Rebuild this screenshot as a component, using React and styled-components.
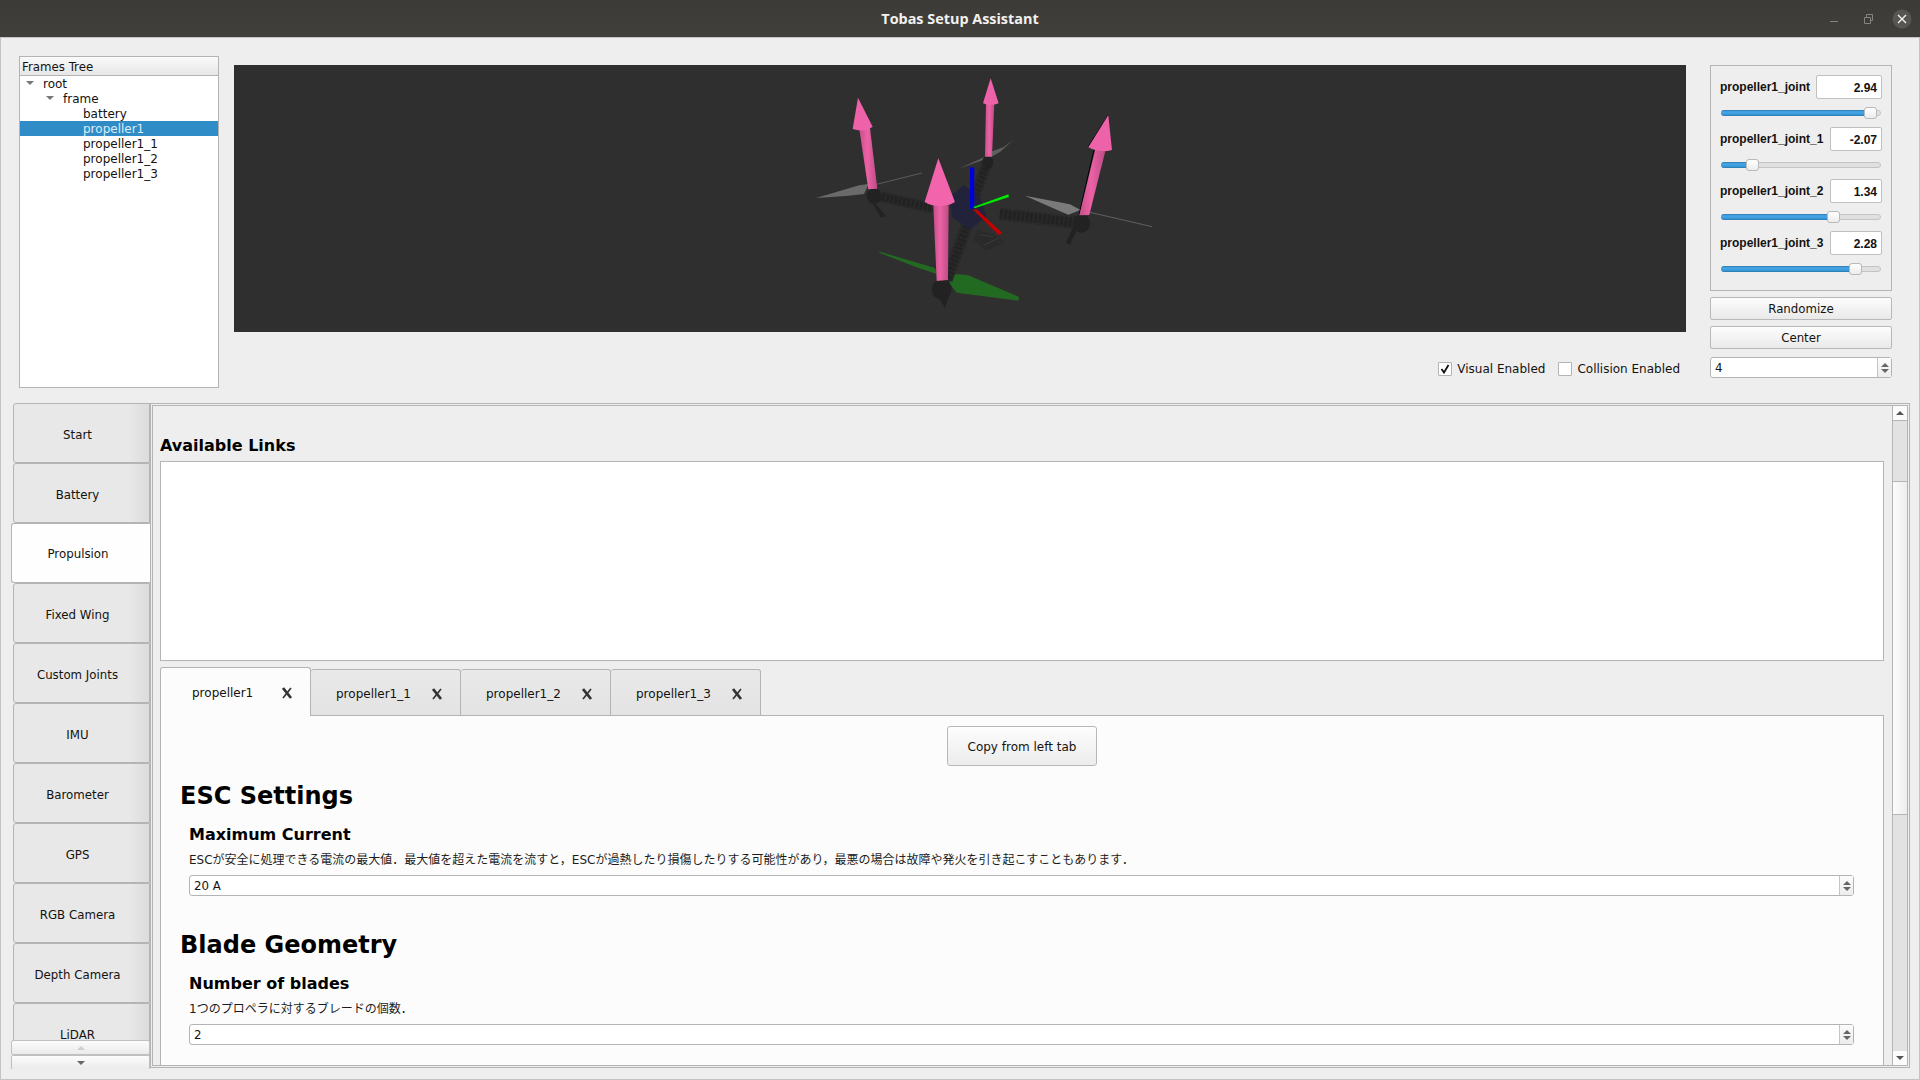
import React from 'react';
import styled, {createGlobalStyle} from 'styled-components';

const GlobalStyle = createGlobalStyle`
    html, body {
        margin: 0;
        padding: 0;
        background: #eeeeee;
    }
    body {
        font-family: "DejaVu Sans", "Noto Sans CJK JP", sans-serif;
        font-size: 12px;
        color: #14120f;
    }
    * {
        box-sizing: border-box;
    }
`;

const LINE = '#b4b4b4';

const Window = styled.div`
    width: 1920px;
    height: 1080px;
    display: flex;
    flex-direction: column;
    overflow: hidden;
`;

const TitleBar = styled.div`
    height: 37px;
    flex: none;
    position: relative;
    display: flex;
    align-items: center;
    justify-content: center;
    background: linear-gradient(#3c3b37, #403f3b);
    color: #f2f1ef;
    font-family: "Open Sans", sans-serif;
    font-size: 14.4px;
    font-weight: 700;
`;

const WindowButtons = styled.div`
    position: absolute;
    top: 0;
    right: 8px;
    height: 37px;
    display: flex;
    align-items: center;
    gap: 14px;
`;

const WindowButton = styled.svg`
    width: 20px;
    height: 20px;
    display: block;
`;

const Body = styled.div`
    flex: 1;
    display: flex;
    flex-direction: column;
    border: 1px solid #c4c4c4;
    background: #eeeeee;
`;

const TopSection = styled.div`
    height: 365px;
    flex: none;
    display: flex;
    padding: 18px 0 0 18px;
`;

const Tree = styled.div`
    width: 200px;
    height: 332px;
    flex: none;
    background: #fff;
    border: 1px solid ${LINE};
`;

const TreeHeader = styled.div`
    height: 19px;
    padding: 2px 0 0 2px;
    background: linear-gradient(#fafafa, #e6e6e6);
    border-bottom: 1px solid ${LINE};
    line-height: 17px;
    font-size: 11.8px;
`;

const TreeRow = styled.div`
    height: 15px;
    display: flex;
    align-items: center;
    padding: 1px 0 0 ${p => p.$indent}px;
    line-height: 15px;
    font-size: 12px;
    background: ${p => p.$selected ? '#308cc6' : 'transparent'};
    color: ${p => p.$selected ? '#d8ecf8' : 'inherit'};
`;

const TreeArrow = styled.span`
    width: 0;
    height: 0;
    margin: 0 9px 3px -17px;
    border-left: 4px solid transparent;
    border-right: 4px solid transparent;
    border-top: 4px solid #777;
`;

const Stage = styled.div`
    width: 1452px;
    flex: none;
    margin: 9px 0 0 15px;
`;

const Viewport = styled.svg`
    width: 1452px;
    height: 267px;
    display: block;
    background: #2f2f2f;
`;

const DisplayOptions = styled.div`
    height: 20px;
    margin-top: 27px;
    padding-right: 6px;
    display: flex;
    justify-content: flex-end;
    align-items: center;
    gap: 13px;
    font-size: 12px;
`;

const CheckLabel = styled.label`
    display: flex;
    align-items: center;
    gap: 5px;
`;

const CheckBox = styled.span`
    width: 14px;
    height: 14px;
    display: flex;
    align-items: center;
    justify-content: center;
    background: #fff;
    border: 1px solid ${LINE};
    border-radius: 1px;
`;

const SidePanel = styled.div`
    width: 182px;
    flex: none;
    margin: 9px 0 0 24px;
`;

const JointBox = styled.div`
    height: 226px;
    padding: 9px 9px 0 9px;
    border: 1px solid ${LINE};
`;

const JointRow = styled.div`
    height: 24px;
    display: flex;
    justify-content: space-between;
    align-items: center;
    font-family: "Liberation Sans", sans-serif;
    font-weight: 700;
    font-size: 12px;
`;

const JointValue = styled.div`
    width: ${p => p.$width}px;
    height: 24px;
    padding: 1px 4px 0 0;
    display: flex;
    align-items: center;
    justify-content: flex-end;
    background: #fff;
    border: 1px solid #c0c0c0;
    border-radius: 2px;
`;

const Slider = styled.div`
    position: relative;
    height: 16px;
    margin: 6px 0 6px 1px;
    width: 160px;
    display: flex;
    align-items: center;
`;

const SliderTrack = styled.div`
    width: 100%;
    height: 6px;
    border: 1px solid #c4c4c4;
    border-radius: 3px;
    background: #e0e0e0;
`;

const SliderFill = styled.div`
    height: 6px;
    margin: -1px 0 0 -1px;
    border-radius: 3px 0 0 3px;
    background: linear-gradient(#2a78ad, #48a6e6 30%, #3a9bdc 70%, #2a78ad);
`;

const SliderHandle = styled.div`
    position: absolute;
    top: 2px;
    width: 13px;
    height: 12px;
    margin-left: -6px;
    background: linear-gradient(#fff, #ececec);
    border: 1px solid #b8b8b8;
    border-radius: 3px;
`;

const PanelButton = styled.div`
    height: 23px;
    margin-top: ${p => p.$top}px;
    display: flex;
    align-items: center;
    justify-content: center;
    background: linear-gradient(#fdfdfd, #e9e9e9);
    border: 1px solid #b8b8b8;
    border-radius: 2px;
    font-size: 11.8px;
`;

const SpinBox = styled.div`
    height: ${p => p.$height || 21}px;
    margin-top: ${p => p.$top || 0}px;
    display: flex;
    background: #fff;
    border: 1px solid ${LINE};
    border-radius: 3px;
    font-size: 11.8px;
`;

const SpinText = styled.div`
    flex: 1;
    padding: 1px 0 0 4px;
    display: flex;
    align-items: center;
`;

const SpinButtons = styled.div`
    width: 14px;
    flex: none;
    display: flex;
    flex-direction: column;
    align-items: center;
    justify-content: center;
    gap: 2px;
    background: linear-gradient(#fbfbfb, #ededed);
    border-left: 1px solid #c4c4c4;
`;

const Triangle = styled.span`
    width: 0;
    height: 0;
    border-left: ${p => p.$size || 4}px solid transparent;
    border-right: ${p => p.$size || 4}px solid transparent;
    ${p => p.$up ? 'border-bottom' : 'border-top'}: ${p => p.$tall || 4}px solid ${p => p.$color || '#666'};
`;

const BottomSection = styled.div`
    flex: 1;
    min-height: 0;
    display: flex;
    padding: 0 0 10px 10px;
`;

const ToolBox = styled.div`
    position: relative;
    width: 139px;
    height: 666px;
    flex: none;
    overflow: hidden;
`;

const ToolTab = styled.div`
    height: 60px;
    margin-left: ${p => p.$active ? 0 : 2}px;
    display: flex;
    align-items: center;
    justify-content: center;
    padding: ${p => p.$active ? '1px 6px 0 0' : '3px 8px 0 0'};
    background: ${p => p.$active
        ? '#fefefe'
        : 'linear-gradient(90deg, #e8e8e8 0, #e8e8e8 85%, #dcdcdc 100%)'};
    border: 1px solid ${LINE};
    border-right: ${p => p.$active ? 'none' : `1px solid ${LINE}`};
    border-radius: 3px 0 0 3px;
    font-size: 11.8px;
`;

const ToolScroll = styled.div`
    position: absolute;
    left: 0;
    width: 139px;
    height: 15px;
    top: ${p => p.$top}px;
    display: flex;
    align-items: center;
    justify-content: center;
    background: linear-gradient(#fcfcfc, #ebebeb);
    border: 1px solid #c0c0c0;
    border-radius: 2px;
`;

const MainFrame = styled.div`
    width: 1760px;
    height: 665px;
    flex: none;
    padding: 1px;
    border: 1px solid ${LINE};
`;

const MainInner = styled.div`
    height: 100%;
    display: flex;
    border: 1px solid ${LINE};
`;

const ScrollContent = styled.div`
    flex: 1;
    min-width: 0;
    overflow: hidden;
    padding: 0 8px 0 7px;
`;

const ScrollBar = styled.div`
    width: 15px;
    flex: none;
    display: flex;
    flex-direction: column;
    border-left: 1px solid ${LINE};
`;

const ScrollArrow = styled.div`
    height: 14px;
    flex: none;
    display: flex;
    align-items: center;
    justify-content: center;
    background: #fbfbfb;
`;

const ScrollTrack = styled.div`
    height: ${p => p.$height ? `${p.$height}px` : 'auto'};
    flex: ${p => p.$height ? 'none' : 1};
    background: #e2e2e2;
    border-top: 1px solid ${LINE};
`;

const ScrollThumb = styled.div`
    height: 333px;
    flex: none;
    background: linear-gradient(90deg, #fcfcfc, #ededed);
    border-top: 1px solid ${LINE};
`;

const SectionLabel = styled.div`
    margin-top: 31px;
    height: 24px;
    line-height: 18px;
    font-weight: 700;
    font-size: 16px;
    color: #000;
`;

const LinkList = styled.div`
    height: 200px;
    background: #fff;
    border: 1px solid ${LINE};
`;

const TabBar = styled.div`
    height: 49px;
    margin-top: 6px;
    display: flex;
    align-items: flex-end;
`;

const Tab = styled.div`
    width: ${p => p.$active ? 151 : 150}px;
    height: ${p => p.$active ? 49 : 47}px;
    display: flex;
    align-items: center;
    padding: ${p => p.$active ? '2px 17px 0 31px' : '2px 17px 0 25px'};
    justify-content: space-between;
    background: ${p => p.$active ? '#fcfcfc' : 'linear-gradient(#e9e9e9, #e3e3e3)'};
    border: 1px solid ${LINE};
    border-left: ${p => p.$active ? `1px solid ${LINE}` : 'none'};
    border-bottom: ${p => p.$active ? 'none' : `1px solid ${LINE}`};
    border-radius: 3px 3px 0 0;
    position: relative;
    z-index: ${p => p.$active ? 1 : 0};
    font-size: 12px;
`;

const TabClose = styled.svg`
    width: 12px;
    height: 12px;
    flex: none;
`;

const TabPage = styled.div`
    height: 400px;
    margin-top: -1px;
    padding: 10px 29px 0 19px;
    background: #fcfcfc;
    border: 1px solid ${LINE};
`;

const CopyRow = styled.div`
    display: flex;
    justify-content: center;
    padding-left: 10px;
`;

const CopyButton = styled.div`
    width: 150px;
    height: 40px;
    padding-top: 1px;
    display: flex;
    align-items: center;
    justify-content: center;
    background: linear-gradient(#fdfdfd, #ececec);
    border: 1px solid #b8b8b8;
    border-radius: 3px;
    font-size: 12px;
`;

const GroupTitle = styled.h2`
    margin: ${p => p.$top}px 0 0;
    height: 30px;
    line-height: 30px;
    font-size: 24px;
    font-weight: 700;
    color: #000;
`;

const Setting = styled.div`
    padding-left: 9px;
`;

const SettingTitle = styled.h3`
    margin: 14px 0 0;
    height: 20px;
    line-height: 20px;
    font-size: 16px;
    font-weight: 700;
    color: #000;
`;

const SettingDesc = styled.p`
    margin: 6px 0 0;
    height: 18px;
    line-height: 18px;
    font-size: 12px;
    white-space: nowrap;
    color: #1c1c1c;
`;

const ComboText = styled(SpinText)`
    font-size: 11.8px;
`;

const Arrow = ({d, fill}) => <path d={d} fill={fill}/>;

// drone coordinates are taken from a 3x crop of the view, hence the scale
const DroneView = () => (
    <Viewport viewBox="0 0 1452 267">
        <defs>
            <linearGradient id="pinkShade" x1="0" x2="1" y1="0" y2="0">
                <stop offset="0" stopColor="#c64f8a"/>
                <stop offset="0.45" stopColor="#ec62a6"/>
                <stop offset="1" stopColor="#bd4c84"/>
            </linearGradient>
            <filter id="soft"><feGaussianBlur stdDeviation="1.2"/></filter>
        </defs>
        <g transform="translate(526 -5) scale(0.3333)">
            <g filter="url(#soft)">
                <path d="M168 414 L298 376 L326 372 L312 402 L258 408 Z" fill="#6b6b6b"/>
                <path d="M350 373 L486 339" stroke="#5a5a5a" strokeWidth="3"/>
                <path d="M597 326 L680 288 L690 276 L730 262 L760 240 L720 276 L695 290 Z" fill="#5f5f5f"/>
                <path d="M795 407 L930 433 L962 450 L925 464 L880 445 Z" fill="#7a7a7a"/>
                <path d="M990 457 L1176 500" stroke="#5f5f5f" strokeWidth="3"/>
                <path d="M355 574 L525 624 L530 642 L470 622 L362 580 Z" fill="#246a22"/>
                <path d="M562 640 L625 646 L776 710 L776 722 L590 698 L570 672 Z" fill="#246a22"/>
                <g stroke="#292929" fill="none">
                    <path d="M340 405 L520 445" strokeWidth="32"/>
                    <path d="M720 462 L960 490" strokeWidth="38"/>
                    <path d="M685 300 L640 420" strokeWidth="32"/>
                    <path d="M620 500 L560 660" strokeWidth="36"/>
                </g>
                <g stroke="#222" fill="none">
                    <path d="M340 405 L520 445" strokeWidth="22" strokeDasharray="8 5"/>
                    <path d="M720 462 L960 490" strokeWidth="26" strokeDasharray="8 5"/>
                    <path d="M685 300 L640 420" strokeWidth="20" strokeDasharray="8 5"/>
                    <path d="M620 500 L560 660" strokeWidth="24" strokeDasharray="8 5"/>
                </g>
                <path d="M570 410 L610 375 L660 410 L680 470 L630 510 L575 470 Z" fill="#23243a"/>
                <path d="M650 510 L700 522 L735 545 L680 572 L640 540 Z" fill="#2a2a2a"/>
                <path d="M660 525 L700 530 M672 556 L716 534" stroke="#444" strokeWidth="2"/>
                <g fill="#242424">
                    <ellipse cx="342" cy="408" rx="22" ry="24"/>
                    <ellipse cx="545" cy="688" rx="30" ry="32"/>
                    <ellipse cx="965" cy="490" rx="26" ry="28"/>
                    <ellipse cx="684" cy="306" rx="16" ry="20"/>
                    <path d="M345 430 L380 470 L362 472 L335 425 Z"/>
                    <path d="M950 510 L930 555 L918 548 L940 500 Z"/>
                    <path d="M530 705 L555 745 L570 700 Z"/>
                </g>
            </g>
            <path d="M630 322 H643 V446 H630 Z" fill="#0000d8"/>
            <path d="M640 441 L745 403 L747 411 L644 445 Z" fill="#00e800"/>
            <path d="M640 450 L648 446 L726 518 L717 526 Z" fill="#c40000"/>
            <Arrow d="M298 208 L330 204 L352 386 L325 388 Z" fill="url(#pinkShade)"/>
            <Arrow d="M294 113 L338 200 Q310 218 278 207 Z" fill="#ee62a9"/>
            <Arrow d="M678 130 L703 130 L696 290 L675 290 Z" fill="url(#pinkShade)"/>
            <Arrow d="M692 55 L716 130 Q692 140 669 130 Z" fill="#ee62a9"/>
            <Arrow d="M520 436 L566 436 L564 660 L530 663 Z" fill="url(#pinkShade)"/>
            <Arrow d="M535 295 L585 426 Q540 452 494 426 Z" fill="#f264ac"/>
            <path d="M1002 270 L958 462" stroke="#000" strokeWidth="3"/>
            <Arrow d="M1006 268 L1036 274 L988 465 L958 466 Z" fill="url(#pinkShade)"/>
            <path d="M1045 165 L985 260" stroke="#000" strokeWidth="3"/>
            <Arrow d="M1045 165 L1056 270 Q1020 280 985 262 Z" fill="#ee62a9"/>
        </g>
    </Viewport>
);

const joints = [
    {name: 'propeller1_joint', value: 2.94, width: 66},
    {name: 'propeller1_joint_1', value: -2.07, width: 52},
    {name: 'propeller1_joint_2', value: 1.34, width: 52},
    {name: 'propeller1_joint_3', value: 2.28, width: 52},
];

const toolTabs = ['Start', 'Battery', 'Propulsion', 'Fixed Wing', 'Custom Joints', 'IMU', 'Barometer', 'GPS', 'RGB Camera', 'Depth Camera', 'LiDAR'];
const linkTabs = ['propeller1', 'propeller1_1', 'propeller1_2', 'propeller1_3'];

const JointControl = ({name, value, width}) => {
    const ratio = (value + Math.PI) / (2 * Math.PI);
    const pos = 6 + 148 * ratio;
    return (
        <>
            <JointRow>
                <span>{name}</span>
                <JointValue $width={width}>{value.toFixed(2)}</JointValue>
            </JointRow>
            <Slider>
                <SliderTrack>
                    <SliderFill style={{width: pos}}/>
                </SliderTrack>
                <SliderHandle style={{left: pos}}/>
            </Slider>
        </>
    );
};

const Spinner = () => (
    <SpinButtons>
        <Triangle $up/>
        <Triangle/>
    </SpinButtons>
);

const App = () => (
    <Window>
        <GlobalStyle/>
        <TitleBar>
            Tobas Setup Assistant
            <WindowButtons>
                <WindowButton viewBox="0 0 20 20">
                    <path d="M6 12.5 H14" stroke="#85837f" strokeWidth="1"/>
                </WindowButton>
                <WindowButton viewBox="0 0 20 20">
                    <path d="M6.5 8.5 H12.5 V14.5 H6.5 Z M8.5 8 V5.5 H14.5 V11.5 H13" stroke="#85837f" strokeWidth="1" fill="none"/>
                </WindowButton>
                <WindowButton viewBox="0 0 20 20">
                    <circle cx="10" cy="10" r="9.5" fill="#575653"/>
                    <path d="M6 6 L14 14 M14 6 L6 14" stroke="#f4f3f1" strokeWidth="1.4"/>
                </WindowButton>
            </WindowButtons>
        </TitleBar>
        <Body>
            <TopSection>
                <Tree>
                    <TreeHeader>Frames Tree</TreeHeader>
                    <TreeRow $indent={23}><TreeArrow/>root</TreeRow>
                    <TreeRow $indent={43}><TreeArrow/>frame</TreeRow>
                    <TreeRow $indent={63}>battery</TreeRow>
                    <TreeRow $indent={63} $selected>propeller1</TreeRow>
                    <TreeRow $indent={63}>propeller1_1</TreeRow>
                    <TreeRow $indent={63}>propeller1_2</TreeRow>
                    <TreeRow $indent={63}>propeller1_3</TreeRow>
                </Tree>
                <Stage>
                    <DroneView/>
                    <DisplayOptions>
                        <CheckLabel>
                            <CheckBox>
                                <svg width="10" height="10" viewBox="0 0 10 10">
                                    <path d="M1.5 5 L4 8.5 L8.5 1" stroke="#111" strokeWidth="1.8" fill="none"/>
                                </svg>
                            </CheckBox>
                            Visual Enabled
                        </CheckLabel>
                        <CheckLabel>
                            <CheckBox/>
                            Collision Enabled
                        </CheckLabel>
                    </DisplayOptions>
                </Stage>
                <SidePanel>
                    <JointBox>
                        {joints.map(joint => <JointControl key={joint.name} {...joint}/>)}
                    </JointBox>
                    <PanelButton $top={6}>Randomize</PanelButton>
                    <PanelButton $top={6}>Center</PanelButton>
                    <SpinBox $top={8}>
                        <SpinText>4</SpinText>
                        <Spinner/>
                    </SpinBox>
                </SidePanel>
            </TopSection>
            <BottomSection>
                <ToolBox>
                    {toolTabs.map(name => <ToolTab key={name} $active={name === 'Propulsion'}>{name}</ToolTab>)}
                    <ToolScroll $top={637}><Triangle $up $color="#cfcfcf"/></ToolScroll>
                    <ToolScroll $top={652}><Triangle/></ToolScroll>
                </ToolBox>
                <MainFrame>
                    <MainInner>
                        <ScrollContent>
                            <SectionLabel>Available Links</SectionLabel>
                            <LinkList/>
                            <TabBar>
                                {linkTabs.map((name, i) => (
                                    <Tab key={name} $active={i === 0}>
                                        {name}
                                        <TabClose viewBox="0 0 12 12">
                                            <path d="M2 1 L10 11" stroke="#333" strokeWidth="2.8"/>
                                            <path d="M10 1 L2 11" stroke="#333" strokeWidth="1.7"/>
                                        </TabClose>
                                    </Tab>
                                ))}
                            </TabBar>
                            <TabPage>
                                <CopyRow>
                                    <CopyButton>Copy from left tab</CopyButton>
                                </CopyRow>
                                <GroupTitle $top={15}>ESC Settings</GroupTitle>
                                <Setting>
                                    <SettingTitle>Maximum Current</SettingTitle>
                                    <SettingDesc>ESCが安全に処理できる電流の最大値．最大値を超えた電流を流すと，ESCが過熱したり損傷したりする可能性があり，最悪の場合は故障や発火を引き起こすこともあります．</SettingDesc>
                                    <SpinBox $height={21} $top={6}>
                                        <ComboText>20 A</ComboText>
                                        <Spinner/>
                                    </SpinBox>
                                </Setting>
                                <GroupTitle $top={34}>Blade Geometry</GroupTitle>
                                <Setting>
                                    <SettingTitle>Number of blades</SettingTitle>
                                    <SettingDesc>1つのプロペラに対するブレードの個数．</SettingDesc>
                                    <SpinBox $height={21} $top={6}>
                                        <ComboText>2</ComboText>
                                        <Spinner/>
                                    </SpinBox>
                                </Setting>
                            </TabPage>
                        </ScrollContent>
                        <ScrollBar>
                            <ScrollArrow><Triangle $up $color="#555"/></ScrollArrow>
                            <ScrollTrack $height={61}/>
                            <ScrollThumb/>
                            <ScrollTrack/>
                            <ScrollArrow><Triangle $color="#555"/></ScrollArrow>
                        </ScrollBar>
                    </MainInner>
                </MainFrame>
            </BottomSection>
        </Body>
    </Window>
);

export default App;
